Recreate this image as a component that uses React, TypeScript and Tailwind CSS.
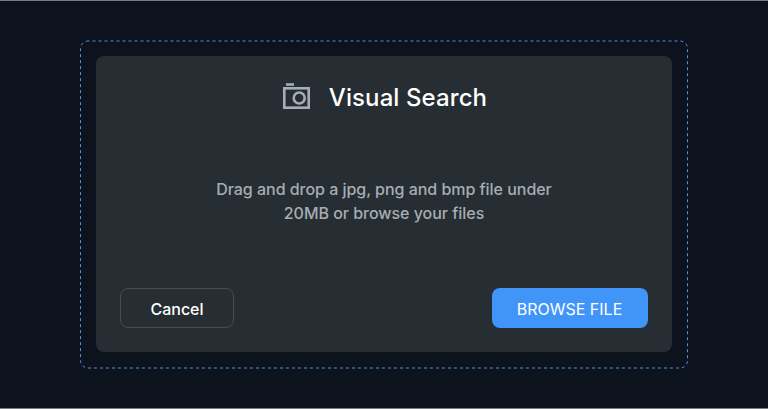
export default function App() {
  return (
    <main className="flex h-[409px] w-[768px] flex-col border-y border-[#777b82] bg-[#0d131c] px-20 pt-[39px] font-['Inter','Liberation_Sans',sans-serif]">
      <div className="relative flex h-[328px] w-[608px] shrink-0 flex-col p-4">
        <svg className="pointer-events-none absolute inset-0 h-full w-full overflow-visible" fill="none">
          <rect x=".5" y="1" width="607" height="327" rx="7.5" stroke="#4a94e6" strokeDasharray="3 3" strokeDashoffset="1.5" />
        </svg>
        <section className="flex h-[296px] w-full flex-col rounded-lg bg-[#262d33] p-6">
          <header className="flex h-[34px] items-center justify-center gap-[19px] pl-0.5 text-2xl font-medium tracking-[0.004em] text-white">
            <svg width="27" height="26" viewBox="0 0 27 26" className="-mt-0.5" fill="none" stroke="#a6adb5" strokeWidth="2.6">
              <rect x="1.3" y="5.3" width="24.4" height="19.4" />
              <path d="M3 1.5h8" />
              <circle cx="16.2" cy="15" r="5.5" />
            </svg>
            <h1 className="pt-px">Visual Search</h1>
          </header>
          <p className="mt-[63px] text-center text-base leading-6 font-medium tracking-[-0.002em] text-[#a6adb5]">
            Drag and drop a jpg, png and bmp file under<br />20MB or browse your files
          </p>
          <footer className="mt-auto flex justify-between text-base font-medium text-white">
            <button className="h-10 w-[114px] rounded-lg border border-[#464c52] pt-0.5">Cancel</button>
            <button className="h-10 w-[156px] rounded-lg bg-[#4195f8] pt-0.5 pr-px font-normal">BROWSE FILE</button>
          </footer>
        </section>
      </div>
    </main>
  );
}
